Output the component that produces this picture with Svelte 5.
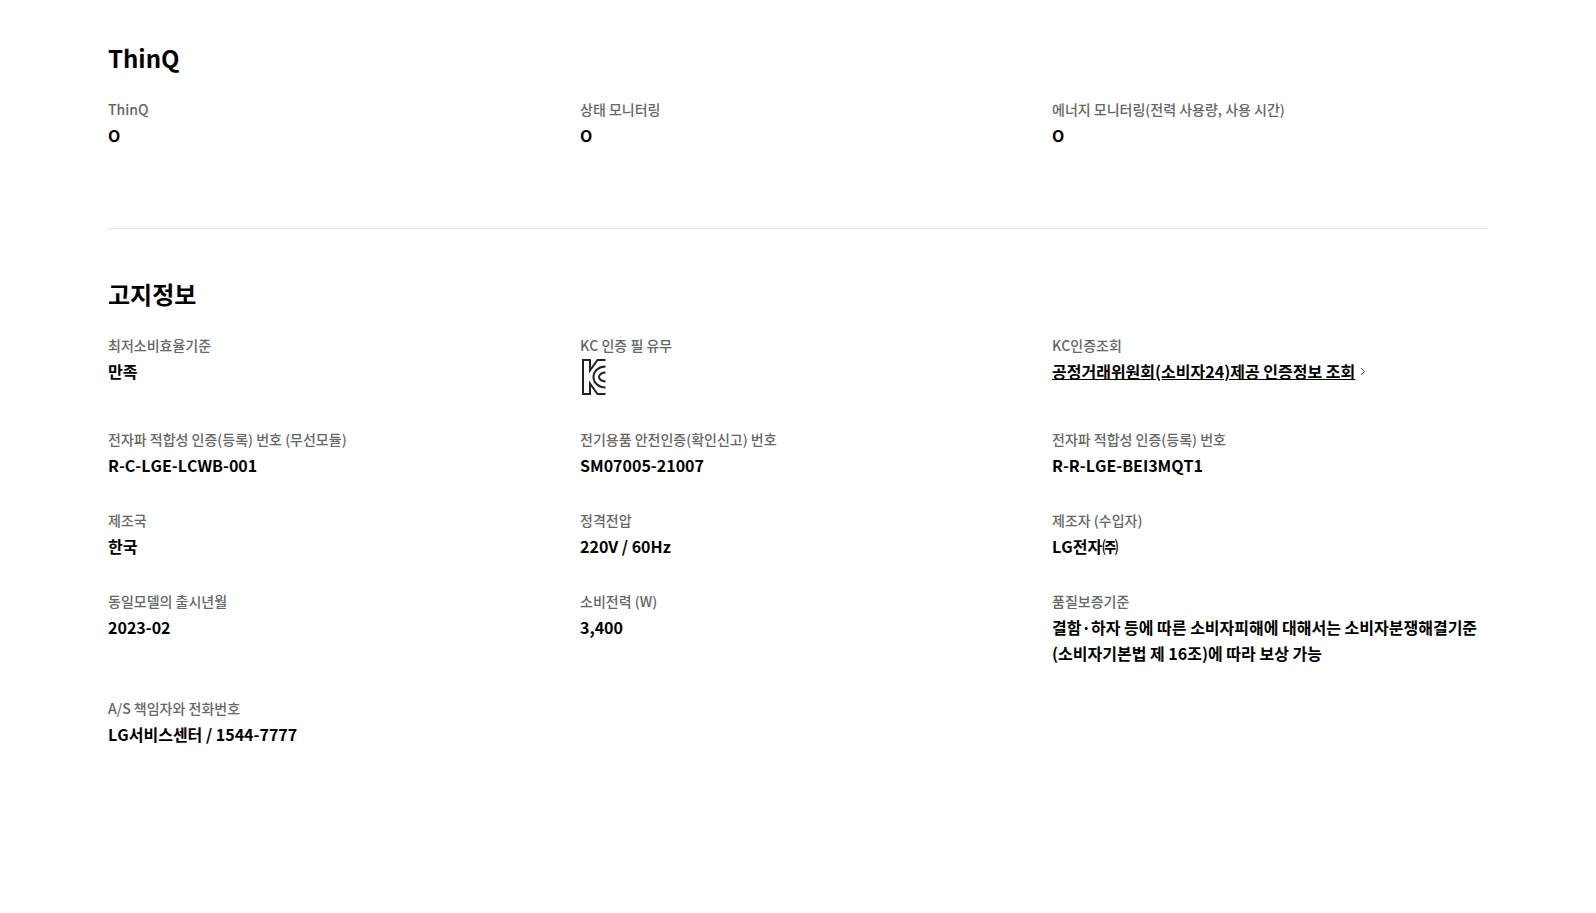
<script>
  const thinq = [
    { label: 'ThinQ', value: 'O' },
    { label: '상태 모니터링', value: 'O' },
    { label: '에너지 모니터링(전력 사용량, 사용 시간)', value: 'O' }
  ];
  const rows = [
    { label: '전자파 적합성 인증(등록) 번호 (무선모듈)', value: 'R-C-LGE-LCWB-001' },
    { label: '전기용품 안전인증(확인신고) 번호', value: 'SM07005-21007' },
    { label: '전자파 적합성 인증(등록) 번호', value: 'R-R-LGE-BEI3MQT1' },
    { label: '제조국', value: '한국' },
    { label: '정격전압', value: '220V / 60Hz' },
    { label: '제조자 (수입자)', value: 'LG전자㈜' },
    { label: '동일모델의 출시년월', value: '2023-02' },
    { label: '소비전력 (W)', value: '3,400' },
    { label: '품질보증기준', value: '결함·하자 등에 따른 소비자피해에 대해서는 소비자분쟁해결기준 (소비자기본법 제 16조)에 따라 보상 가능' },
    { label: 'A/S 책임자와 전화번호', value: 'LG서비스센터 / 1544-7777' }
  ];
</script>

<main class="page">
  <section class="section first">
    <h2>ThinQ</h2>
    <dl class="grid">
      {#each thinq as item}
        <div class="item"><dt>{item.label}</dt><dd>{item.value}</dd></div>
      {/each}
    </dl>
  </section>
  <section class="section">
    <h2>고지정보</h2>
    <dl class="grid">
      <div class="item"><dt>최저소비효율기준</dt><dd>만족</dd></div>
      <div class="item">
        <dt>KC 인증 필 유무</dt>
        <dd class="kc">
          <svg width="24" height="36" viewBox="0 0 24 36" fill="none" stroke="#222" stroke-width="2" aria-label="KC">
            <path d="M23.5 1H15.5L8 11.5V1H1V35H8V24.5L15.5 35H23.5"/>
            <path d="M23.5 7.5C17 7.5 11.5 12 11.5 18C11.5 24 17 28.5 23.5 28.5"/>
            <path d="M23.5 13.5C20 13.5 17 15.5 17 18C17 20.5 20 22.5 23.5 22.5"/>
          </svg>
        </dd>
      </div>
      <div class="item">
        <dt>KC인증조회</dt>
        <dd><a href="#kc">공정거래위원회(소비자24)제공 인증정보 조회</a><svg class="chev" width="6" height="9" viewBox="0 0 6 9" fill="none"><path d="M1 1 4.6 4.5 1 8" stroke="#444" stroke-width="1"/></svg></dd>
      </div>
      {#each rows as item}
        <div class="item"><dt>{item.label}</dt><dd>{item.value}</dd></div>
      {/each}
    </dl>
  </section>
</main>

<style>
  :global(body) {
    margin: 0;
    background: #fff;
  }
  .page {
    padding: 0 108px;
    font-family: "Noto Sans CJK KR", "Noto Sans", sans-serif;
    font-kerning: none;
    color: #000;
    height: 913px;
    box-sizing: border-box;
    overflow: hidden;
  }
  .section {
    padding: 47px 0 0;
  }
  .section.first {
    padding: 40px 0 80px;
    border-bottom: 1px solid #e4e4e4;
  }
  h2 {
    margin: 0;
    font-size: 24px;
    line-height: 36px;
    font-weight: 700;
    padding-bottom: 20px;
  }
  .grid {
    margin: 0;
    display: grid;
    grid-template-columns: repeat(3, 436px);
    column-gap: 36px;
    row-gap: 29px;
  }
  dt {
    font-size: 14px;
    line-height: 26px;
    font-weight: 500;
    color: #666;
  }
  dd {
    margin: 0;
    font-size: 16px;
    line-height: 26px;
    font-weight: 700;
    color: #000;
  }
  .kc {
    height: 39px;
    padding: 1px 0 0 2px;
    box-sizing: border-box;
  }
  .kc svg {
    display: block;
  }
  a {
    color: #000;
    text-decoration: underline;
  }
  .chev {
    margin-left: 5px;
    vertical-align: 2px;
  }
</style>
